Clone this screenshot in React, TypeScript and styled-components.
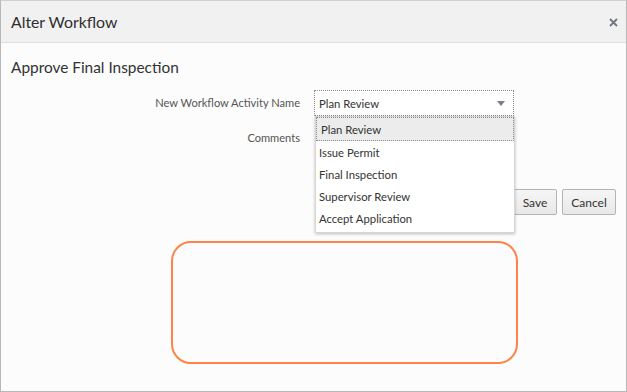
import styled, { createGlobalStyle } from 'styled-components'

const GlobalStyle = createGlobalStyle`
  html, body {
    margin: 0;
    padding: 0;
    background: #ffffff;
  }
  body {
    font-family: Lato, 'Open Sans', sans-serif;
    color: #333333;
  }
`

const Dialog = styled.div`
  width: 627px;
  height: 392px;
  box-sizing: border-box;
  border: 1px solid #b8b8b8;
  border-top-color: #cfcfcf;
  background: #fcfcfc;
  display: flex;
  flex-direction: column;
`

const Header = styled.div`
  height: 41px;
  flex-shrink: 0;
  display: flex;
  align-items: center;
  justify-content: space-between;
  padding: 0 7px 0 10px;
  background: #f1f1f1;
  border-bottom: 1px solid #dedede;
`

const HeaderTitle = styled.div`
  font-size: 15.8px;
  color: #2f2f2f;
`

const CloseButton = styled.div`
  width: 12px;
  height: 12px;
  display: flex;
  align-items: center;
  justify-content: center;
  margin-top: 2px;
`

const Body = styled.div`
  flex: 1;
  padding: 13px 10px 0 9px;
  display: flex;
  flex-direction: column;
`

const Heading = styled.div`
  font-size: 15.4px;
  color: #333333;
  line-height: 22px;
  margin-bottom: 12px;
  padding-left: 1px;
`

const Form = styled.div`
  display: grid;
  grid-template-columns: 290px 200px;
  column-gap: 14px;
  row-gap: 9px;
`

const Label = styled.div`
  font-size: 11.1px;
  color: #555555;
  text-align: right;
  line-height: 26px;
`

const Field = styled.div<{ $h: number }>`
  position: relative;
  height: ${({ $h }) => $h}px;
`

const Select = styled.div`
  height: 26px;
  box-sizing: border-box;
  border: 1px dotted #8a8a8a;
  background: #ffffff;
  display: flex;
  align-items: center;
  justify-content: space-between;
  padding: 0 8px 0 4px;
  font-size: 11.3px;
  color: #333333;
`

const Caret = styled.div`
  width: 0;
  height: 0;
  border-left: 4px solid transparent;
  border-right: 4px solid transparent;
  border-top: 5px solid #7a8089;
`

const Menu = styled.div`
  position: absolute;
  left: 1px;
  top: 26px;
  width: 198px;
  background: #ffffff;
  border: 1px solid #d6d6d6;
  box-shadow: 0 1px 3px rgba(0, 0, 0, 0.25);
  z-index: 2;
  padding-bottom: 3px;
`

const Option = styled.div<{ $active?: boolean }>`
  height: ${({ $active }) => ($active ? 24 : 22)}px;
  box-sizing: border-box;
  display: flex;
  align-items: center;
  padding-left: ${({ $active }) => ($active ? 4 : 3)}px;
  font-size: 11.3px;
  color: #333333;
  background: ${({ $active }) => ($active ? '#ececec' : '#ffffff')};
  border: ${({ $active }) => ($active ? '1px dotted #8a8a8a' : 'none')};
`

const Actions = styled.div`
  display: flex;
  justify-content: flex-end;
  gap: 5px;
  margin-top: 24px;
  padding-right: 0;
`

const Button = styled.button<{ $w: number }>`
  width: ${({ $w }) => $w}px;
  height: 26px;
  padding: 0;
  box-sizing: border-box;
  border: 1px solid #b4b4b4;
  border-radius: 2px;
  background: linear-gradient(#f6f6f6, #e8e8e8);
  font-family: Lato, 'Open Sans', sans-serif;
  font-size: 12px;
  color: #333333;
`

const Highlight = styled.div`
  margin: 26px 0 0 161px;
  width: 347px;
  height: 123px;
  box-sizing: border-box;
  border: 2px solid #ff8246;
  border-radius: 20px;
`

const options = [
  'Plan Review',
  'Issue Permit',
  'Final Inspection',
  'Supervisor Review',
  'Accept Application',
]

export default function App() {
  return (
    <>
      <GlobalStyle />
      <Dialog>
        <Header>
          <HeaderTitle>Alter Workflow</HeaderTitle>
          <CloseButton>
            <svg width="9" height="9" viewBox="0 0 9 9">
              <path d="M1 1 L8 8 M8 1 L1 8" stroke="#6f7680" strokeWidth="1.8" />
            </svg>
          </CloseButton>
        </Header>
        <Body>
          <Heading>Approve Final Inspection</Heading>
          <Form>
            <Label>New Workflow Activity Name</Label>
            <Field $h={26}>
              <Select>
                Plan Review
                <Caret />
              </Select>
              <Menu>
                {options.map((o, i) => (
                  <Option key={o} $active={i === 0}>
                    {o}
                  </Option>
                ))}
              </Menu>
            </Field>
            <Label>Comments</Label>
            <Field $h={40} />
          </Form>
          <Actions>
            <Button $w={44}>Save</Button>
            <Button $w={54}>Cancel</Button>
          </Actions>
          <Highlight />
        </Body>
      </Dialog>
    </>
  )
}
